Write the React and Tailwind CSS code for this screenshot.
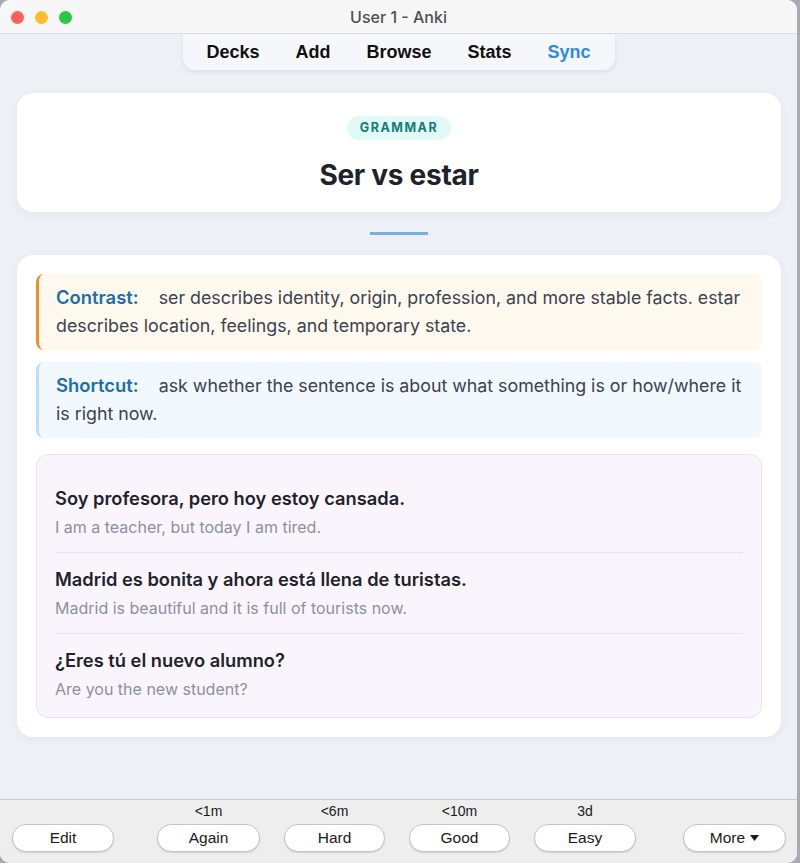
import React from 'react';

const navItems = ['Decks', 'Add', 'Browse', 'Stats', 'Sync'];

const examples = [
  { es: 'Soy profesora, pero hoy estoy cansada.', en: 'I am a teacher, but today I am tired.' },
  { es: 'Madrid es bonita y ahora está llena de turistas.', en: 'Madrid is beautiful and it is full of tourists now.' },
  { es: '¿Eres tú el nuevo alumno?', en: 'Are you the new student?' },
];

const answers = [
  { label: 'Again', time: '<1m', w: 'w-[103px]' },
  { label: 'Hard', time: '<6m', w: 'w-[101px]' },
  { label: 'Good', time: '<10m', w: 'w-[101px]' },
  { label: 'Easy', time: '3d', w: 'w-[102px]' },
];

const PillButton = ({ children, className = '' }) => (
  <button
    className={`h-[28px] rounded-full bg-white border border-[#c4c4c4] shadow-[0_1px_1px_rgba(0,0,0,0.12)] text-[15.5px] text-[#1a1a1a] flex items-center justify-center ${className}`}
  >
    {children}
  </button>
);

const Note = ({ label, text, tone }) => (
  <div
    className={`rounded-lg border-l-[3px] pl-[17px] pr-[10px] py-[10px] text-[17.8px] leading-[28px] text-[#3b4250] ${
      tone === 'amber' ? 'bg-[#fef9ef] border-[#ef8f2b]' : 'bg-[#f1f8fe] border-[#b9e1f6]'
    }`}
  >
    <span className="text-[18.4px] leading-[20px] font-semibold text-[#1b6fae] mr-[20px]">{label}</span>
    <span>{text}</span>
  </div>
);

export default function App() {
  return (
    <div className="h-[863px] w-[800px] bg-[#a7abb2] flex" style={{ fontFamily: 'Inter, "Noto Sans", sans-serif' }}>
      <div className="w-[797px] h-full flex flex-col rounded-[10px] overflow-hidden bg-[#edf1f7]">
        {/* title bar */}
        <div className="h-[34px] shrink-0 bg-[#f7f7f8] border-b border-[#dcdcdc] relative flex items-center justify-center">
          <div className="absolute left-[11px] top-[11px] flex gap-[11px]">
            <span className="w-[13px] h-[13px] rounded-full bg-[#fe5f57]" />
            <span className="w-[13px] h-[13px] rounded-full bg-[#febc2e]" />
            <span className="w-[13px] h-[13px] rounded-full bg-[#28c840]" />
          </div>
          <span className="text-[16px] font-medium text-[#4f4f4f]">User 1 - Anki</span>
        </div>

        {/* main */}
        <div className="flex-1 flex flex-col">
          <div className="flex justify-center">
            <nav
              className="w-[432px] h-[36px] bg-[#f5f7fa] rounded-b-[12px] shadow-[0_2px_5px_rgba(0,0,0,0.08)] flex items-center justify-center gap-[36px] text-[18px] font-bold text-[#111]"
              style={{ fontFamily: '"Liberation Sans", Arial, sans-serif' }}
            >
              {navItems.map((n) => (
                <span key={n} className={n === 'Sync' ? 'text-[#2e8be0]' : ''}>{n}</span>
              ))}
            </nav>
          </div>

          <div className="px-[17px] pt-[23px] pr-[16px] flex flex-col">
            <div className="bg-white rounded-[16px] shadow-[0_2px_10px_rgba(20,30,60,0.06)] h-[119px] flex flex-col items-center pt-[23px]">
              <span className="h-[24px] px-[13px] rounded-full bg-[#e1faf7] text-[#147c77] text-[12.5px] font-bold tracking-[0.12em] flex items-center">
                GRAMMAR
              </span>
              <h1 className="mt-[17px] text-[28px] leading-[36px] font-bold text-[#1e222b] tracking-[-0.01em]">Ser vs estar</h1>
            </div>

            <div className="self-center w-[58px] h-[3px] bg-[#7bafd7] mt-[20px] mb-[20px]" />

            <div className="bg-white rounded-[16px] shadow-[0_2px_10px_rgba(20,30,60,0.06)] p-[19px] flex flex-col gap-[12px]">
              <Note
                tone="amber"
                label="Contrast:"
                text="ser describes identity, origin, profession, and more stable facts. estar describes location, feelings, and temporary state."
              />
              <Note
                tone="sky"
                label="Shortcut:"
                text="ask whether the sentence is about what something is or how/where it is right now."
              />
              <div className="mt-[4px] rounded-[12px] bg-[#faf5fd] border border-[#ebe3ef] px-[18px] pt-[17px] pb-[3px]">
                {examples.map((ex, i) => (
                  <div key={i} className={`py-[14px] ${i < examples.length - 1 ? 'border-b border-[#e9e5ec]' : ''}`}>
                    <div className="text-[18.3px] leading-[24px] font-semibold text-[#1f232b]">{ex.es}</div>
                    <div className="mt-[6px] text-[16px] leading-[22px] text-[#8a919e]">{ex.en}</div>
                  </div>
                ))}
              </div>
            </div>
          </div>
        </div>

        {/* bottom bar */}
        <div
          className="h-[64px] shrink-0 bg-[#eeeeee] border-t border-[#c9c9c9] flex items-end pb-[11px] pl-[12px] pr-[11px]"
          style={{ fontFamily: '"Liberation Sans", Arial, sans-serif' }}
        >
          <PillButton className="w-[102px]">Edit</PillButton>
          <div className="flex-1 flex justify-center gap-[24px] pr-[4px]">
            {answers.map((a) => (
              <div key={a.label} className="flex flex-col items-center">
                <span className="text-[14px] leading-[18px] text-[#1a1a1a] mb-[4px]">{a.time}</span>
                <PillButton className={a.w}>{a.label}</PillButton>
              </div>
            ))}
          </div>
          <PillButton className="w-[103px] gap-[5px]">
            More
            <svg width="9" height="6" viewBox="0 0 9 6"><path d="M0 0h9L4.5 6z" fill="#1a1a1a" /></svg>
          </PillButton>
        </div>
      </div>
    </div>
  );
}
